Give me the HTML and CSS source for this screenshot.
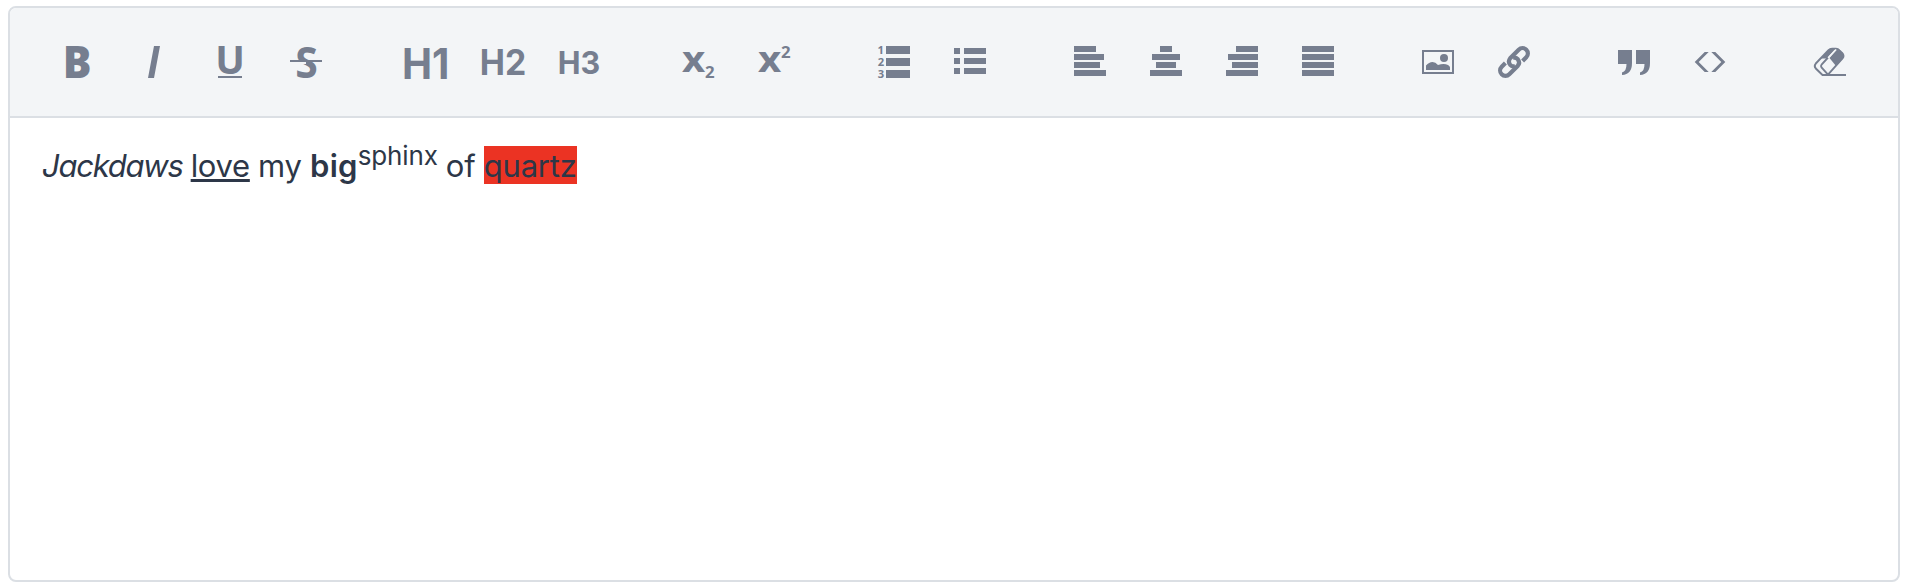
FILE: index.html
```html
<!DOCTYPE html>
<html lang="en">
<head>
<meta charset="utf-8">
<title>Editor</title>
<link rel="stylesheet" href="styles.css">
</head>
<body>
<main class="editor">
  <div class="toolbar">
    <div class="group">
      <button class="tool" aria-label="Bold"><svg class="icon" viewBox="0 0 32 32"><text class="glyph heavy" transform="translate(.8 32) scale(.95 1)" font-size="45">B</text></svg></button>
      <button class="tool" aria-label="Italic"><svg class="icon" viewBox="0 0 32 32"><path d="M16 0h6l-6 32h-6z"/></svg></button>
      <button class="tool" aria-label="Underline"><svg class="icon" viewBox="0 0 32 32"><text class="glyph" transform="translate(1.200 27.500) scale(1.020 1)" font-size="38.500">U</text><path d="M4 30h24v2H4z"/></svg></button>
      <button class="tool" aria-label="Strikethrough"><svg class="icon" viewBox="0 0 32 32"><text class="glyph" transform="translate(5.300 31.500) scale(.94 1)" font-size="43.500">S</text><path class="cut" d="M0 16h16v2H0z"/><path d="M0 14h32v2H0z"/></svg></button>
    </div>
    <div class="group">
      <button class="tool"><svg class="icon" viewBox="0 0 32 32"><text class="heading" x="-8" y="32.600" font-size="42.600" textLength="47.500" lengthAdjust="spacingAndGlyphs">H1</text></svg></button>
      <button class="tool"><svg class="icon" viewBox="0 0 32 32"><text class="heading" x="-6.300" y="29" font-size="35" textLength="46.500" lengthAdjust="spacingAndGlyphs">H2</text></svg></button>
      <button class="tool"><svg class="icon" viewBox="0 0 32 32"><text class="heading" x="-4.300" y="28" font-size="31" textLength="42.500" lengthAdjust="spacingAndGlyphs">H3</text></svg></button>
    </div>
    <div class="group">
      <button class="tool" aria-label="Subscript"><svg class="icon" viewBox="0 0 32 32"><text class="glyph" transform="translate(0 26) scale(1.1 1)" font-size="36.500">x</text><text class="glyph" x="23" y="32" font-size="16.800">2</text></svg></button>
      <button class="tool" aria-label="Superscript"><svg class="icon" viewBox="0 0 32 32"><text class="glyph" transform="translate(0 26) scale(1.1 1)" font-size="36.500">x</text><text class="glyph" x="23" y="12" font-size="16.800">2</text></svg></button>
    </div>
    <div class="group">
      <button class="tool" aria-label="Ordered list"><svg class="icon" viewBox="0 0 32 32"><text class="glyph" x="-.5" y="8" font-size="11.200">1</text><text class="glyph" x="-.2" y="20" font-size="11.200">2</text><text class="glyph" x="-.2" y="32" font-size="11.200">3</text><path d="M8 0h24v8H8zM8 12h24v8H8zM8 24h24v8H8z"/></svg></button>
      <button class="tool" aria-label="Bullet list"><svg class="icon" viewBox="0 0 32 32"><path d="M0 2h6v6H0zM10 2h22v6H10zM0 12h6v6H0zM10 12h22v6H10zM0 22h6v6H0zM10 22h22v6H10z"/></svg></button>
    </div>
    <div class="group">
      <button class="tool" aria-label="Align left"><svg class="icon" viewBox="0 0 32 32"><path d="M0 0h22v6H0zM0 8h30v6H0zM0 16h26v6H0zM0 24h32v6H0z"/></svg></button>
      <button class="tool" aria-label="Align center"><svg class="icon" viewBox="0 0 32 32"><path d="M10 0h12v6H10zM2 8h28v6H2zM6 16h20v6H6zM0 24h32v6H0z"/></svg></button>
      <button class="tool" aria-label="Align right"><svg class="icon" viewBox="0 0 32 32"><path d="M10 0h22v6H10zM2 8h30v6H2zM6 16h26v6H6zM0 24h32v6H0z"/></svg></button>
      <button class="tool" aria-label="Justify"><svg class="icon" viewBox="0 0 32 32"><path d="M0 0h32v6H0zM0 8h32v6H0zM0 16h32v6H0zM0 24h32v6H0z"/></svg></button>
    </div>
    <div class="group">
      <button class="tool" aria-label="Image"><svg class="icon" viewBox="0 0 32 32"><path fill-rule="evenodd" d="M0 4h32v24H0zM2 6v20h28V6z"/><circle cx="22" cy="12" r="4"/><path d="M4 24v-4.500Q7 16 10.500 16Q13.500 16 16 19Q22 16.800 26 19Q28 20 28 21.500V24z"/></svg></button>
      <button class="tool" aria-label="Link"><svg class="icon" viewBox="0 0 32 32"><g class="line" stroke-width="4.200"><path d="M24.600 15L28.300 11.300A5.300 5.300 0 0 0 20.700 3.700L12.200 12.200A5.300 5.300 0 0 0 12.200 18.800Q14 20.800 17 20.300"/><path d="M7.400 17L3.700 20.700A5.300 5.300 0 0 0 11.300 28.300L19.800 19.800A5.300 5.300 0 0 0 19.800 13.200Q18 11.200 15 11.700"/></g></svg></button>
    </div>
    <div class="group">
      <button class="tool" aria-label="Quote"><svg class="icon" viewBox="0 0 32 32"><path d="M0 4h14v13Q14 28.500 4 29V26.500Q8.500 25.500 8.500 18H0zM18 4h14v13Q32 28.500 22 29V26.500Q26.500 25.500 26.500 18H18z"/></svg></button>
      <button class="tool" aria-label="Code"><svg class="icon" viewBox="0 0 32 32"><path d="M10.700 6h4L4.700 16l10 10h-4L.7 16zM21.300 6h-4l10 10-10 10h4l10-10z"/></svg></button>
    </div>
    <div class="group">
      <button class="tool" aria-label="Clear formatting"><svg class="icon" viewBox="0 0 32 32"><path d="M8 28h24v2H8z"/><path class="line" stroke-width="1.900" d="M8.500 29L1.800 22.500Q-.3 20 1.800 17.500L14.500 4.200Q16 2.800 18 2.800H22Q24 2.800 25.500 4.500L28.500 7.500Q30.500 10 28.500 12.300L14 28.700M14 28.700L7.500 21.500Q6.400 20 7.600 18.500L14.500 11"/><path d="M15.500 3Q16.500 2 18 2H22L19.500 5 12.500 12.500H7z"/><path d="M23 3.500L29 7Q31 9.500 29.200 12L22 20 15.500 12z"/><path class="gap" d="M22 3.500L14 12"/></svg></button>
    </div>
  </div>
  <div class="content" contenteditable="true" spellcheck="false"><em class="italic">Jackdaws</em> <u class="underline">love</u> my <strong class="bold">big</strong><sup class="super">sphinx</sup> of <span class="highlight">quartz</span></div>
</main>
</body>
</html>
```

FILE: styles.css
```css
* { box-sizing: border-box; }
body {
  margin: 0;
  height: 588px;
  padding: 6px 6px 6px 8px;
  background: #fff;
  font-family: Inter, "Liberation Sans", sans-serif;
}
.editor {
  height: 576px;
  display: flex;
  flex-direction: column;
  border: 2px solid #dbdfe4;
  border-radius: 8px;
  overflow: hidden;
}
.toolbar {
  height: 110px;
  flex: none;
  display: flex;
  align-items: center;
  gap: 44px;
  padding: 0 30px;
  background: #f3f5f7;
  border-bottom: 2px solid #dbdfe4;
}
.group { display: flex; }
.tool {
  width: 76px;
  height: 64px;
  padding: 0;
  border: 0;
  background: none;
  display: flex;
  align-items: center;
  justify-content: center;
}
.icon {
  width: 32px;
  height: 32px;
  overflow: visible;
  fill: #767e8f;
}
.glyph { font-family: "Open Sans", sans-serif; font-weight: 700; }
.heavy { font-weight: 800; }
.heading { font-family: Inter, sans-serif; font-weight: 700; }
.line { fill: none; stroke: #767e8f; }
.gap { fill: none; stroke: #f3f5f7; stroke-width: 1.2px; }
.cut { fill: #f3f5f7; }
.content {
  flex: 1;
  padding: 24px 32px;
  font-size: 31px;
  line-height: 48px;
  word-spacing: -.5px;
  letter-spacing: -.1px;
  color: #2d3748;
  outline: none;
}
.italic { font-style: italic; letter-spacing: -1.25px; }
.underline {
  letter-spacing: -.3px;
  text-decoration-thickness: 3px;
  text-underline-offset: 2px;
  text-decoration-skip-ink: none;
}
.bold { font-weight: 600; letter-spacing: .3px; }
.super {
  position: relative;
  top: -12px;
  font-size: 26px;
  letter-spacing: -.15px;
  line-height: 0;
  vertical-align: baseline;
}
.highlight { background: #eb3323; padding-top: 1px; letter-spacing: -.25px; }
```
